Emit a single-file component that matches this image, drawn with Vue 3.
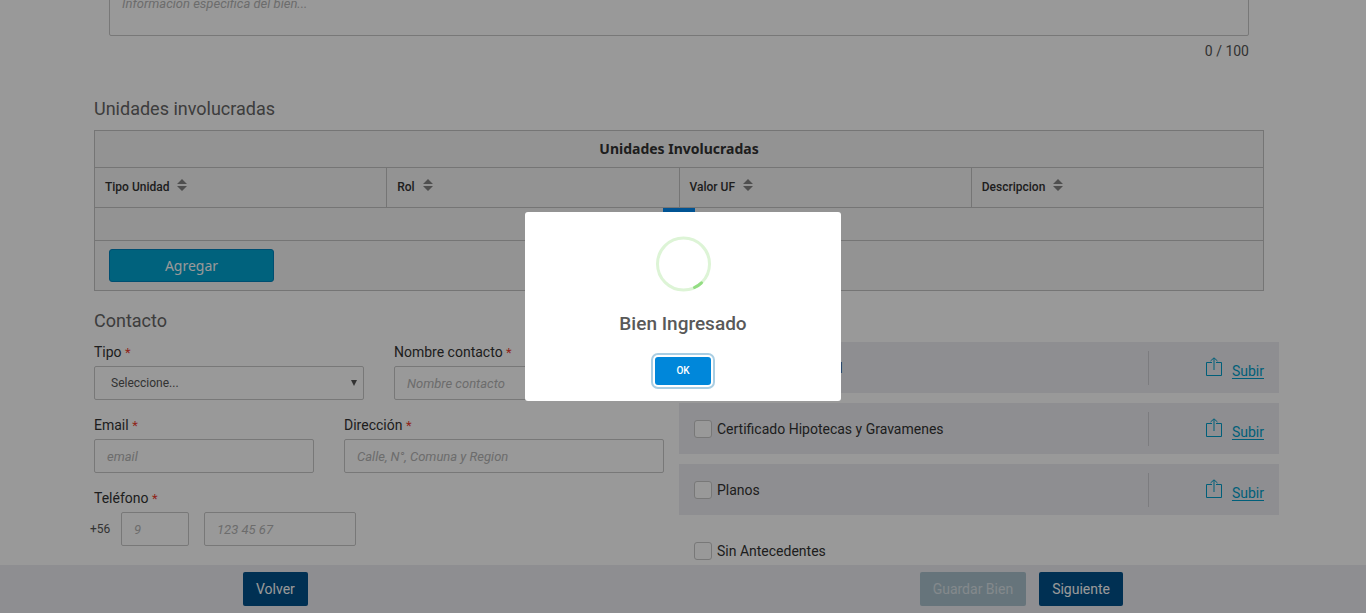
<script setup>
import { ref } from 'vue'

const columns = ['Tipo Unidad', 'Rol', 'Valor UF', 'Descripcion']
const documents = ['Certificado Regional', 'Certificado Hipotecas y Gravamenes', 'Planos']
const detail = ref('')
</script>

<template>
  <div class="page">
    <main class="content">
      <section class="detail">
        <textarea v-model="detail" aria-label="Información específica" placeholder="Información específica del bien..."></textarea>
        <p class="counter">{{ detail.length }} / 100</p>
      </section>

      <section class="units">
        <h2>Unidades involucradas</h2>
        <table>
          <thead>
            <tr class="caption-row"><th colspan="4">Unidades Involucradas</th></tr>
            <tr class="head-row">
              <th v-for="name in columns" :key="name" scope="col">
                {{ name }}
                <svg class="sort" width="10" height="12" viewBox="0 0 10 12" aria-hidden="true">
                  <path d="M5 0 10 5H0zM0 7h10L5 12z" fill="#848484" />
                </svg>
              </th>
            </tr>
          </thead>
          <tbody>
            <tr class="empty-row"><td colspan="4"></td></tr>
          </tbody>
          <tfoot>
            <tr class="add-row"><td colspan="4"><button type="button" class="add">Agregar</button></td></tr>
          </tfoot>
        </table>
      </section>

      <div class="columns">
        <form class="contact" @submit.prevent>
          <h2>Contacto</h2>
          <div class="fields halves">
            <div class="field">
              <label for="tipo">Tipo <i>*</i></label>
              <div class="select">
                <select id="tipo"><option>Seleccione...</option></select>
                <svg width="6" height="6" viewBox="0 0 6 6" aria-hidden="true"><path d="M0 0h6L3 6z" fill="#555" /></svg>
              </div>
            </div>
            <div class="field">
              <label for="nombre">Nombre contacto <i>*</i></label>
              <input id="nombre" type="text" placeholder="Nombre contacto">
            </div>
          </div>
          <div class="fields address">
            <div class="field">
              <label for="email">Email <i>*</i></label>
              <input id="email" type="email" placeholder="email">
            </div>
            <div class="field">
              <label for="direccion">Dirección <i>*</i></label>
              <input id="direccion" type="text" placeholder="Calle, N°, Comuna y Region">
            </div>
          </div>
          <div class="field">
            <label for="telefono">Teléfono <i>*</i></label>
            <div class="phone">
              <span>+56</span>
              <input class="area" type="text" aria-label="Código de área" placeholder="9">
              <input id="telefono" class="number" type="tel" placeholder="123 45 67">
            </div>
          </div>
        </form>

        <section class="documents" aria-label="Antecedentes">
          <div v-for="name in documents" :key="name" class="document">
            <label><input type="checkbox">{{ name }}</label>
            <div class="upload">
              <svg width="16" height="20" viewBox="0 0 16 20" fill="none" stroke="#009fcb" aria-hidden="true">
                <path d="M6 5.5H.5v13h15v-13H10M8 13V1M4.500 4 8 .8 11.500 4" />
              </svg>
              <a href="#">Subir</a>
            </div>
          </div>
          <div class="document plain">
            <label><input type="checkbox">Sin Antecedentes</label>
          </div>
        </section>
      </div>
    </main>

    <footer class="actions">
      <button type="button">Volver</button>
      <div class="forward">
        <button type="button" disabled>Guardar Bien</button>
        <button type="button">Siguiente</button>
      </div>
    </footer>

    <div class="loader" aria-hidden="true"></div>
    <div class="overlay">
      <div class="modal" role="dialog" aria-modal="true" aria-labelledby="modal-title">
        <svg class="success" width="56" height="56" viewBox="0 0 56 56" fill="none" stroke-width="3" aria-hidden="true">
          <circle cx="28.500" cy="28" r="26" stroke="#ddf4d6" />
          <path d="M39.500 51.500A26 26 0 0 0 46.500 46.800" stroke="#93dd83" stroke-linecap="round" />
        </svg>
        <h3 id="modal-title">Bien Ingresado</h3>
        <button type="button">OK</button>
      </div>
    </div>
  </div>
</template>

<style>
body {
  background: #fff;
  overflow: hidden;
}
</style>

<style scoped>
* {
  box-sizing: border-box;
}

.page {
  height: 100vh;
  overflow: hidden;
  font-family: Roboto, "Liberation Sans", sans-serif;
  font-size: 14px;
  line-height: 20px;
  color: #333;
}

button,
input,
select,
textarea {
  font: inherit;
  margin: 0;
}

.content {
  max-width: 1200px;
  margin: -44px auto 0;
  padding: 0 15px;
  position: relative;
  right: 4px;
}

.detail {
  padding: 0 15px;
}

textarea {
  display: block;
  width: 100%;
  height: 80px;
  padding: 38px 12px 8px;
  border: 1px solid #c8c8c8;
  border-radius: 2px;
  resize: none;
  font-size: 13px;
  line-height: 18px;
}

.counter {
  margin: 5px 0 0;
  text-align: right;
  color: #555;
}

h2 {
  margin: 0;
  font-size: 18px;
  font-weight: 400;
  line-height: 24px;
  color: #666;
}

.units {
  padding-top: 36px;
}

table {
  width: 100%;
  margin-top: 9px;
  border-collapse: collapse;
  table-layout: fixed;
  background: #f5f5f5;
}

th,
td {
  border: 1px solid #c4c4c4;
  padding: 0 14px;
}

.caption-row {
  height: 37px;
  font-family: "Noto Sans", sans-serif;
  font-size: 14px;
}

.head-row {
  height: 40px;
}

.head-row th {
  padding: 0 10px 2px;
  text-align: left;
  font-size: 12px;
  font-weight: 500;
}

.sort {
  margin-left: 5px;
}

.empty-row {
  height: 33px;
}

.add-row {
  height: 50px;
}

.add {
  display: block;
  width: 165px;
  height: 33px;
  padding: 0;
  border: 1px solid #0082bc;
  border-radius: 3px;
  background: #00a3d0;
  color: #fff;
  font-family: "Noto Sans", sans-serif;
}

.columns {
  display: grid;
  grid-template-columns: 570fr 600fr;
  gap: 15px;
  margin-right: -15px;
  padding-top: 18px;
}

.fields {
  display: grid;
  gap: 30px;
}

.halves {
  grid-template-columns: 1fr 1fr;
}

.address {
  grid-template-columns: 220fr 320fr;
}

.field {
  padding-top: 9px;
  margin-bottom: 6px;
}

.field label {
  display: block;
  margin-bottom: 4px;
}

.field i {
  font-size: 13px;
  font-style: normal;
  line-height: 1;
  color: #f03c2e;
}

.field input,
.field select {
  display: block;
  width: 100%;
  height: 34px;
  padding: 0 12px;
  border: 1px solid #c8c8c8;
  border-radius: 2px;
  background: #fff;
  font-size: 13px;
}

.field .select {
  position: relative;
}

.field select {
  padding: 0 16px;
  appearance: none;
  font-size: 12px;
  color: #555;
}

.select svg {
  position: absolute;
  right: 7px;
  top: 14px;
}

::placeholder {
  color: #b5b5b5;
  font-style: italic;
  opacity: 1;
}

.phone {
  display: flex;
  align-items: center;
  margin-left: -4px;
  font-size: 12px;
  color: #555;
}

.phone span {
  width: 31px;
}

.phone .area {
  width: 68px;
  margin-right: 15px;
}

.phone .number {
  width: 152px;
}

.documents {
  padding-top: 33px;
}

.document {
  display: flex;
  align-items: center;
  justify-content: space-between;
  height: 51px;
  margin-bottom: 10px;
  padding: 0 15px;
  background: #ededf2;
}

.document.plain {
  background: none;
}

.document label {
  display: flex;
  align-items: center;
  gap: 5px;
}

.document input {
  appearance: none;
  width: 18px;
  height: 18px;
  border: 1px solid #c8c8c8;
  border-radius: 3px;
  background: #fff;
}

.upload {
  display: flex;
  align-items: center;
  justify-content: flex-end;
  width: 116px;
  height: 34px;
  border-left: 1px solid #cfcfd4;
}

.upload svg {
  margin: 0 10px 2px 0;
}

a {
  padding-top: 6px;
  color: #009fcb;
  text-underline-offset: 2px;
}

.actions {
  position: fixed;
  inset: auto 0 0;
  display: flex;
  justify-content: space-between;
  height: 48px;
  padding: 7px 243px 0;
  background: #ededf2;
}

.forward {
  display: flex;
  gap: 13px;
}

.actions button {
  height: 34px;
  padding: 0 13px;
  border: 0;
  border-radius: 2px;
  background: #00508a;
  color: #fff;
}

.actions button:disabled {
  background: #aac2ce;
  color: #dce4e9;
}

.loader {
  position: fixed;
  left: calc(50% - 20px);
  top: 208px;
  width: 32px;
  height: 32px;
  background: #008af5;
}

.overlay {
  position: fixed;
  inset: 0;
  display: flex;
  align-items: center;
  justify-content: center;
  background: rgba(0, 0, 0, 0.4);
}

.modal {
  display: flex;
  flex-direction: column;
  align-items: center;
  width: 316px;
  padding: 24px 16px 16px;
  border-radius: 3px;
  background: #fff;
}

.modal h3 {
  margin: 20px 0 21px;
  font-size: 19px;
  font-weight: 500;
  line-height: 24px;
  color: #595959;
}

.modal button {
  width: 56px;
  height: 28px;
  padding: 0;
  border: 0;
  border-radius: 3px;
  background: #0087da;
  box-shadow: 0 0 0 2px #fff, 0 0 0 4px #a9cee3;
  color: #fff;
  font-size: 10px;
  font-weight: 500;
}
</style>
